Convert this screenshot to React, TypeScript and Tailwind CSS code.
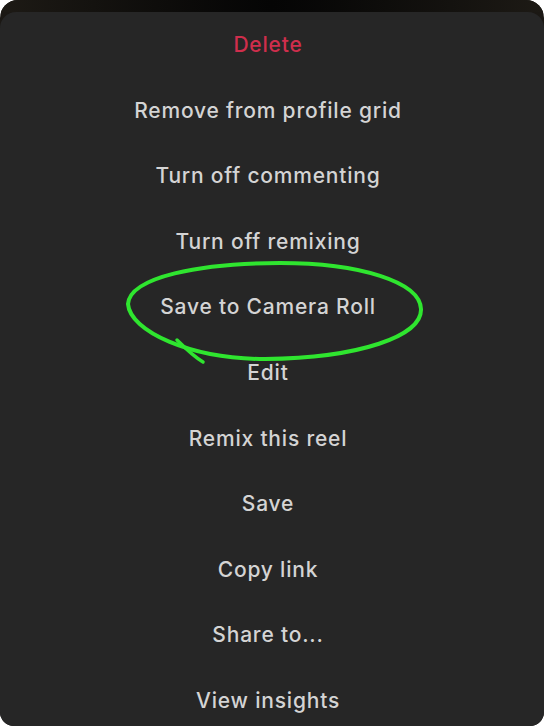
import React from 'react';

const items: { label: string; danger?: boolean }[] = [
  { label: 'Delete', danger: true },
  { label: 'Remove from profile grid' },
  { label: 'Turn off commenting' },
  { label: 'Turn off remixing' },
  { label: 'Save to Camera Roll' },
  { label: 'Edit' },
  { label: 'Remix this reel' },
  { label: 'Save' },
  { label: 'Copy link' },
  { label: 'Share to...' },
  { label: 'View insights' },
];

const App: React.FC = () => {
  return (
    <div className="w-[544px] h-[726px] bg-white relative" style={{ fontFamily: 'Inter, "Noto Sans", sans-serif' }}>
      <div className="w-full h-full rounded-t-[18px] rounded-b-[14px] overflow-hidden bg-[#1b1814] flex flex-col">
        {/* strip of the video behind the sheet */}
        <div className="h-[12px] shrink-0 bg-gradient-to-r from-[#1d1a15] via-[#050505] to-[#1d1a15]" />
        <div className="flex-1 bg-[#262626] rounded-t-[16px] flex flex-col pr-[8px]">
          {items.map((item) => (
            <div key={item.label} className="h-[65.6px] flex items-center justify-center">
              <span
                className={`text-[21px] font-medium tracking-[0.8px] ${item.danger ? 'text-[#cf2e4c]' : 'text-[#d4d4d4]'}`}
              >
                {item.label}
              </span>
            </div>
          ))}
        </div>
      </div>

      {/* hand-drawn highlight */}
      <svg className="absolute inset-0 pointer-events-none" width="544" height="726" viewBox="0 0 544 726">
        <path
          d="M 128 304 C 130 277 200 263 280 263 C 360 263 420 282 421 309 C 422 336 360 358 265 359 C 190 359 130 331 128 304 Z"
          fill="none"
          stroke="#2fe52f"
          strokeWidth="4"
          strokeLinecap="round"
        />
        <path d="M 177 340 C 185 348 193 356 203 362" fill="none" stroke="#2fe52f" strokeWidth="3.5" strokeLinecap="round" />
      </svg>
    </div>
  );
};

export default App;
